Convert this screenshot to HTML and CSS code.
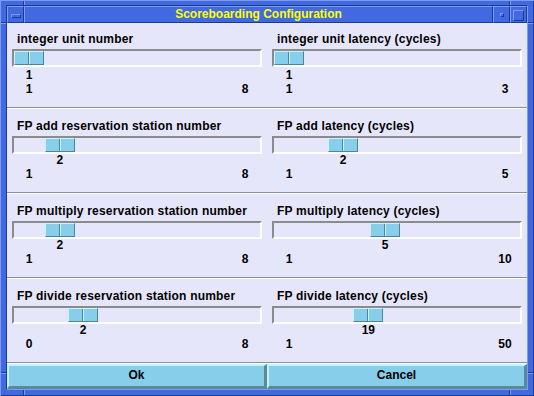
FILE: index.html
```html
<!DOCTYPE html>
<html lang="en">
<head>
    <meta charset="UTF-8">
    <title>Scoreboarding Configuration</title>
    <link rel="stylesheet" href="styles.css">
</head>
<body>

    <div class="window">
        <div class="frame-inner">

            <!-- Title bar -->
            <div class="titlebar">
                <div class="tb-btn"><span class="menu-bar"></span></div>
                <div class="title">Scoreboarding Configuration</div>
                <div class="tb-btn"><span class="min-dot"></span></div>
                <div class="tb-btn"><span class="max-box"></span></div>
            </div>

            <div class="content">

                <div class="row">
                    <div class="scale" style="--p:0">
                        <div class="scale-label">integer unit number</div>
                        <div class="trough"><div class="thumb"></div></div>
                        <div class="value"><span>1</span></div>
                        <div class="range"><span>1</span><span>8</span></div>
                    </div>
                    <div class="scale" style="--p:0">
                        <div class="scale-label">integer unit latency (cycles)</div>
                        <div class="trough"><div class="thumb"></div></div>
                        <div class="value"><span>1</span></div>
                        <div class="range"><span>1</span><span>3</span></div>
                    </div>
                </div>

                <div class="row">
                    <div class="scale" style="--p:0.142857">
                        <div class="scale-label">FP add reservation station number</div>
                        <div class="trough"><div class="thumb"></div></div>
                        <div class="value"><span>2</span></div>
                        <div class="range"><span>1</span><span>8</span></div>
                    </div>
                    <div class="scale" style="--p:0.25">
                        <div class="scale-label">FP add latency (cycles)</div>
                        <div class="trough"><div class="thumb"></div></div>
                        <div class="value"><span>2</span></div>
                        <div class="range"><span>1</span><span>5</span></div>
                    </div>
                </div>

                <div class="row">
                    <div class="scale" style="--p:0.142857">
                        <div class="scale-label">FP multiply reservation station number</div>
                        <div class="trough"><div class="thumb"></div></div>
                        <div class="value"><span>2</span></div>
                        <div class="range"><span>1</span><span>8</span></div>
                    </div>
                    <div class="scale" style="--p:0.444444">
                        <div class="scale-label">FP multiply latency (cycles)</div>
                        <div class="trough"><div class="thumb"></div></div>
                        <div class="value"><span>5</span></div>
                        <div class="range"><span>1</span><span>10</span></div>
                    </div>
                </div>

                <div class="row">
                    <div class="scale" style="--p:0.25">
                        <div class="scale-label">FP divide reservation station number</div>
                        <div class="trough"><div class="thumb"></div></div>
                        <div class="value"><span>2</span></div>
                        <div class="range"><span>0</span><span>8</span></div>
                    </div>
                    <div class="scale" style="--p:0.367347">
                        <div class="scale-label">FP divide latency (cycles)</div>
                        <div class="trough"><div class="thumb"></div></div>
                        <div class="value"><span>19</span></div>
                        <div class="range"><span>1</span><span>50</span></div>
                    </div>
                </div>

                <div class="buttons">
                    <button class="btn">Ok</button>
                    <button class="btn">Cancel</button>
                </div>

            </div>
        </div>
    </div>

</body>
</html>
```

FILE: styles.css
```css
/* Page */
body {
    margin: 0;
    background: #4169e1;
    font-family: 'Liberation Sans', Arial, sans-serif;
    font-size: 12px;
    font-weight: bold;
    color: #000;
}

/* Window frame (mwm style) */
.window {
    width: 534px;
    height: 396px;
    box-sizing: border-box;
    padding: 5px 6px 6px 6px;
    background-color: #4169e1;
    /* resize-corner notches */
    background-image:
        linear-gradient(to right, #1f3a8c 1px, #7e9cf2 1px),
        linear-gradient(to right, #1f3a8c 1px, #7e9cf2 1px),
        linear-gradient(to right, #1f3a8c 1px, #7e9cf2 1px),
        linear-gradient(to right, #1f3a8c 1px, #7e9cf2 1px),
        linear-gradient(#1f3a8c 1px, #7e9cf2 1px),
        linear-gradient(#1f3a8c 1px, #7e9cf2 1px),
        linear-gradient(#1f3a8c 1px, #7e9cf2 1px),
        linear-gradient(#1f3a8c 1px, #7e9cf2 1px);
    background-size: 2px 5px, 2px 5px, 2px 6px, 2px 6px, 6px 2px, 6px 2px, 6px 2px, 6px 2px;
    background-position: 23px 0, 509px 0, 23px 390px, 509px 390px, 0 22px, 528px 22px, 0 372px, 528px 372px;
    background-repeat: no-repeat;
    box-shadow: inset 1px 1px 0 #7e9cf2, inset -1px -1px 0 #1f3a8c;
}

.frame-inner {
    height: 100%;
    box-sizing: border-box;
    border: 1px solid;
    border-color: #1f3a8c #7e9cf2 #7e9cf2 #1f3a8c;
    display: flex;
    flex-direction: column;
}

/* Title bar */
.titlebar {
    display: flex;
    height: 17px;
}

.tb-btn,
.title {
    box-sizing: border-box;
    border: 1px solid;
    border-color: #7e9cf2 #1f3a8c #1f3a8c #7e9cf2;
    background: #4169e1;
}

.tb-btn {
    width: 17px;
    display: flex;
    justify-content: center;
    align-items: center;
}

.title {
    flex: 1;
    text-align: center;
    line-height: 15px;
    color: #ffff00;
}

.menu-bar,
.min-dot,
.max-box {
    display: block;
    box-sizing: border-box;
    border: 1px solid;
    border-color: #7e9cf2 #1f3a8c #1f3a8c #7e9cf2;
}

.menu-bar { width: 10px; height: 4px; margin-top: 2px; }
.min-dot  { width: 4px; height: 4px; margin-top: 1px; }
.max-box  { width: 11px; height: 11px; margin-top: 1px; }

/* Dialog body */
.content {
    flex: 1;
    background: #e6e6fa;
    display: flex;
    flex-direction: column;
}

.row {
    display: grid;
    grid-template-columns: 1fr 1fr;
    padding: 9px 0 12px;
    border-bottom: 1px solid #8e8e9a;
    box-shadow: 0 1px 0 #fff;
    margin-bottom: 1px;
}

.row:first-child {
    padding: 8px 0 12px;
}

.row:first-child .value {
    margin-top: 2px;
}

/* Scale widget */
.scale {
    padding: 0 5px;
}

.scale-label {
    padding-left: 5px;
    line-height: 16px;
    letter-spacing: 0.2px;
    white-space: nowrap;
}

.trough {
    margin-top: 2px;
    height: 14px;
    border: 2px solid;
    border-color: #8b8b8b #fff #fff #8b8b8b;
}

.thumb {
    width: 30px;
    height: 14px;
    box-sizing: border-box;
    margin-left: calc((100% - 30px) * var(--p));
    border: 1px solid;
    border-color: #c8f4ff #4f8596 #4f8596 #c8f4ff;
    background: linear-gradient(to right, #87ceeb 13px, #4f8596 13px 14px, #c8f4ff 14px 15px, #87ceeb 15px);
}

.value {
    padding: 0 2px;
    line-height: 12px;
}

.value span {
    display: block;
    width: 30px;
    text-align: center;
    margin-left: calc((100% - 30px) * var(--p));
}

.range {
    display: flex;
    justify-content: space-between;
    padding: 0 2px;
    margin-top: 2px;
    line-height: 12px;
}

.range span {
    width: 30px;
    text-align: center;
}

/* Ok / Cancel */
.buttons {
    display: grid;
    grid-template-columns: 1fr 1fr;
    flex: 1;
}

.btn {
    font: inherit;
    color: #000;
    background: #87ceeb;
    border-style: solid;
    border-width: 2px 3px 3px 2px;
    border-color: #c0f4ff #5b8a96 #5b8a96 #c0f4ff;
    padding: 0 0 2px;
    margin: 0;
}
```
